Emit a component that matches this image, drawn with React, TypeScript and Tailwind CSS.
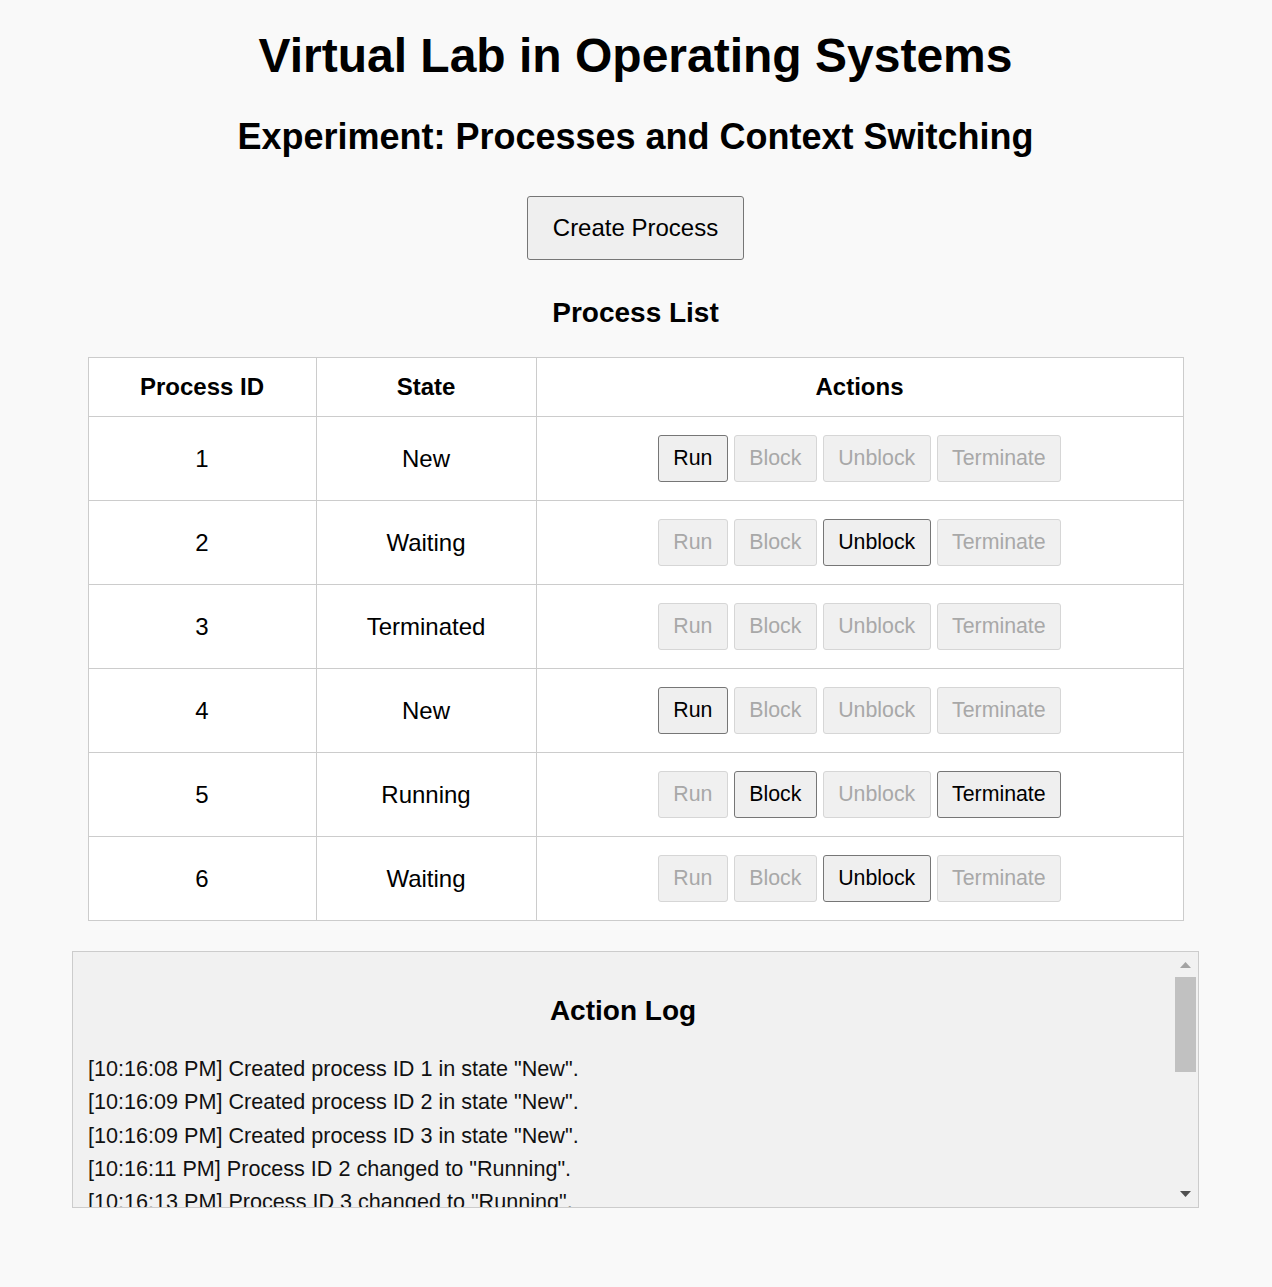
import React, { useEffect, useRef, useState } from 'react';

type ProcState = 'New' | 'Running' | 'Waiting' | 'Terminated';

interface Proc {
  id: number;
  state: ProcState;
}

const INITIAL: Proc[] = [
  { id: 1, state: 'New' },
  { id: 2, state: 'Waiting' },
  { id: 3, state: 'Terminated' },
  { id: 4, state: 'New' },
  { id: 5, state: 'Running' },
  { id: 6, state: 'Waiting' },
];

const INITIAL_LOG = [
  '[10:16:08 PM] Created process ID 1 in state "New".',
  '[10:16:09 PM] Created process ID 2 in state "New".',
  '[10:16:09 PM] Created process ID 3 in state "New".',
  '[10:16:11 PM] Process ID 2 changed to "Running".',
  '[10:16:13 PM] Process ID 3 changed to "Running".',
  '[10:16:14 PM] Process ID 2 changed to "Waiting".',
  '[10:16:16 PM] Process ID 3 changed to "Terminated".',
  '[10:16:18 PM] Created process ID 4 in state "New".',
  '[10:16:19 PM] Created process ID 5 in state "New".',
  '[10:16:20 PM] Created process ID 6 in state "New".',
  '[10:16:22 PM] Process ID 6 changed to "Running".',
  '[10:16:24 PM] Process ID 6 changed to "Waiting".',
  '[10:16:26 PM] Process ID 5 changed to "Running".',
];

function ActionButton({ label, enabled, onClick }: { label: string; enabled: boolean; onClick: () => void }) {
  return (
    <button
      disabled={!enabled}
      onClick={onClick}
      className={`h-[47px] px-[14.4px] rounded-[3px] border text-[21.33px] leading-none ${
        enabled
          ? 'bg-[#efefef] border-[#767676] text-black cursor-pointer hover:bg-[#e5e5e5]'
          : 'bg-[#f0f0f0] border-[#d6d6d6] text-[#a8a8a8] cursor-default'
      }`}
    >
      {label}
    </button>
  );
}

// log panel with a drawn scrollbar (classic look with arrows)
function LogPanel({ lines }: { lines: string[] }) {
  const scrollRef = useRef<HTMLDivElement>(null);
  const [thumb, setThumb] = useState({ top: 0, height: 94 });
  const track = 205;

  const update = () => {
    const el = scrollRef.current;
    if (!el) return;
    const h = Math.max(30, (track * el.clientHeight) / el.scrollHeight);
    const max = el.scrollHeight - el.clientHeight;
    const top = max > 0 ? ((track - h) * el.scrollTop) / max : 0;
    setThumb({ top, height: h });
  };

  useEffect(update, [lines]);

  return (
    <div className="mt-[30px] mx-auto w-[1127px] h-[257px] flex border border-[#cccccc] bg-[#f1f1f1]">
      <div
        ref={scrollRef}
        onScroll={update}
        className="flex-1 overflow-y-auto [scrollbar-width:none] pl-[15px] pr-[17px] pb-[20px]"
      >
        <h3 className="mt-[43px] text-center text-[28px] leading-[32px] font-bold">Action Log</h3>
        <div className="mt-[25px] text-[21.6px] leading-[33.33px] text-[#111]">
          {lines.map((line, i) => (
            <div key={i}>{line}</div>
          ))}
        </div>
      </div>
      <div className="w-[23px] flex flex-col pr-[2px]">
        <button
          onClick={() => scrollRef.current?.scrollBy({ top: -40 })}
          className="h-[25px] flex items-center justify-center"
        >
          <svg width="11" height="6" viewBox="0 0 11 6">
            <path d="M5.5 0 L11 6 L0 6 Z" fill="#a3a3a3" />
          </svg>
        </button>
        <div className="relative flex-1">
          <div
            className="absolute left-0 right-0 bg-[#c1c1c1]"
            style={{ top: thumb.top, height: thumb.height }}
          />
        </div>
        <button
          onClick={() => scrollRef.current?.scrollBy({ top: 40 })}
          className="h-[25px] flex items-center justify-center pb-[2px]"
        >
          <svg width="11" height="6" viewBox="0 0 11 6">
            <path d="M0 0 L11 0 L5.5 6 Z" fill="#505050" />
          </svg>
        </button>
      </div>
    </div>
  );
}

export default function App() {
  const [procs, setProcs] = useState<Proc[]>(INITIAL);
  const [log, setLog] = useState<string[]>(INITIAL_LOG);

  const stamp = () =>
    new Date().toLocaleTimeString('en-US', { hour: 'numeric', minute: '2-digit', second: '2-digit' });

  const createProcess = () => {
    const id = procs.length + 1;
    setProcs([...procs, { id, state: 'New' }]);
    setLog([...log, `[${stamp()}] Created process ID ${id} in state "New".`]);
  };

  const changeState = (id: number, state: ProcState) => {
    setProcs(procs.map((p) => (p.id === id ? { ...p, state } : p)));
    setLog([...log, `[${stamp()}] Process ID ${id} changed to "${state}".`]);
  };

  return (
    <div className="min-h-screen bg-[#f9f9f9] text-black font-['Liberation_Sans',Arial,sans-serif] pr-[1px] pb-[80px]">
      <h1 className="pt-[28px] text-center text-[48px] leading-[55px] font-bold">Virtual Lab in Operating Systems</h1>
      <h2 className="mt-[33px] text-center text-[36px] leading-[41px] font-bold">Experiment: Processes and Context Switching</h2>

      <div className="mt-[39px] flex justify-center">
        <button
          onClick={createProcess}
          className="w-[217px] h-[64px] rounded-[3px] border border-[#767676] bg-[#efefef] text-[24px] leading-none cursor-pointer hover:bg-[#e5e5e5]"
        >
          Create Process
        </button>
      </div>

      <h3 className="mt-[37px] text-center text-[28px] leading-[32px] font-bold">Process List</h3>

      <table className="mt-[28px] mx-auto w-[1096px] border-collapse bg-white text-[24px]">
        <thead>
          <tr className="h-[59px]">
            <th className="w-[228px] border border-[#cccccc] font-bold">Process ID</th>
            <th className="w-[220px] border border-[#cccccc] font-bold">State</th>
            <th className="border border-[#cccccc] font-bold">Actions</th>
          </tr>
        </thead>
        <tbody>
          {procs.map((p) => (
            <tr key={p.id} className="h-[84px]">
              <td className="border border-[#cccccc] text-center pt-[1px]">{p.id}</td>
              <td className="border border-[#cccccc] text-center pt-[1px]">{p.state}</td>
              <td className="border border-[#cccccc]">
                <div className="flex justify-center gap-[6px]">
                  <ActionButton label="Run" enabled={p.state === 'New'} onClick={() => changeState(p.id, 'Running')} />
                  <ActionButton label="Block" enabled={p.state === 'Running'} onClick={() => changeState(p.id, 'Waiting')} />
                  <ActionButton label="Unblock" enabled={p.state === 'Waiting'} onClick={() => changeState(p.id, 'Running')} />
                  <ActionButton label="Terminate" enabled={p.state === 'Running'} onClick={() => changeState(p.id, 'Terminated')} />
                </div>
              </td>
            </tr>
          ))}
        </tbody>
      </table>

      <LogPanel lines={log} />
    </div>
  );
}
